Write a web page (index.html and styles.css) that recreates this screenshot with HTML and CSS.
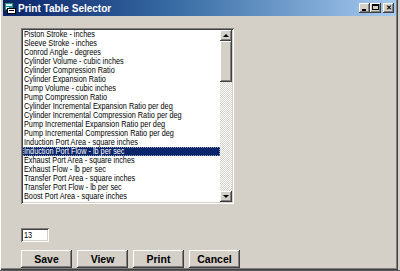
FILE: index.html
```html
<!DOCTYPE html>
<html>
<head>
<meta charset="utf-8">
<link rel="stylesheet" href="styles.css">
</head>
<body>
<div class="window">
  <div class="titlebar">
    <svg class="appicon" width="12" height="12" viewBox="0 0 12 12">
      <rect x="0.5" y="0.5" width="9" height="8" fill="#2e8c9c" stroke="#0b3540"/>
      <rect x="2" y="2" width="6" height="2" fill="#d8f4f8"/>
      <rect x="2" y="5" width="3" height="2" fill="#d8f4f8"/>
      <rect x="3.5" y="6.5" width="8" height="5" fill="#ffffff" stroke="#000"/>
      <rect x="5" y="8" width="5" height="1" fill="#000"/>
    </svg>
    <span class="title">Print Table Selector</span>
    <div class="controls">
      <div class="cbtn"><span class="g-min"></span></div>
      <div class="cbtn"><span class="g-max"></span></div>
      <div class="cbtn close"><span class="g-close">✕</span></div>
    </div>
  </div>
  <div class="content">
    <div class="listbox">
      <ul class="items">
        <li><span>Piston Stroke - inches</span></li>
        <li><span>Sleeve Stroke - inches</span></li>
        <li><span>Conrod Angle - degrees</span></li>
        <li><span>Cylinder Volume - cubic inches</span></li>
        <li><span>Cylinder Compression Ratio</span></li>
        <li><span>Cylinder Expansion Ratio</span></li>
        <li><span>Pump Volume - cubic inches</span></li>
        <li><span>Pump Compression Ratio</span></li>
        <li><span>Cylinder Incremental Expansion Ratio per deg</span></li>
        <li><span>Cylinder Incremental Compression Ratio per deg</span></li>
        <li><span>Pump Incremental Expansion Ratio per deg</span></li>
        <li><span>Pump Incremental Compression Ratio per deg</span></li>
        <li><span>Induction Port Area - square inches</span></li>
        <li class="sel"><span>Induction Port Flow - lb per sec</span></li>
        <li><span>Exhaust Port Area - square inches</span></li>
        <li><span>Exhaust Flow - lb per sec</span></li>
        <li><span>Transfer Port Area - square inches</span></li>
        <li><span>Transfer Port Flow - lb per sec</span></li>
        <li><span>Boost Port Area - square inches</span></li>
      </ul>
      <div class="scrollbar">
        <div class="sbtn"><span class="tri up"></span></div>
        <div class="thumb"></div>
        <div class="track"></div>
        <div class="sbtn"><span class="tri down"></span></div>
      </div>
    </div>
    <div class="field"><span>13</span></div>
    <div class="buttons">
      <div class="btn">Save</div>
      <div class="btn">View</div>
      <div class="btn">Print</div>
      <div class="btn">Cancel</div>
    </div>
  </div>
</div>
<div class="strip"></div>
</body>
</html>
```

FILE: styles.css
```css
* { box-sizing: border-box; }
html, body { margin: 0; padding: 0; }
body {
  width: 400px;
  height: 271px;
  background: #d4d0c8;
  overflow: hidden;
  font-family: "Liberation Sans", Arial, sans-serif;
}
.window {
  width: 398px;
  height: 270px;
  background: #d4d0c8;
  padding: 0 2px 0 3px;
  box-shadow: inset 1px 0 #ffffff, inset -1px -1px #404040, inset -2px -2px #808080;
}
.titlebar {
  height: 16px;
  display: flex;
  align-items: center;
  padding-left: 1px;
  background: linear-gradient(to right, #0a246a 0%, #3a6ea5 45%, #a6caf0 100%);
}
.appicon { flex: none; margin-right: 2px; }
.title {
  color: #ffffff;
  font-weight: bold;
  font-size: 10px;
  flex: 1;
}
.controls { display: flex; margin-right: 2px; }
.cbtn {
  width: 11px;
  height: 10px;
  background: #d4d0c8;
  box-shadow: inset -1px -1px #404040, inset 1px 1px #ffffff, inset -2px -2px #808080;
  position: relative;
}
.cbtn.close { margin-left: 2px; }
.g-min {
  position: absolute; left: 3px; top: 6px; width: 4px; height: 2px; background: #000;
}
.g-max {
  position: absolute; left: 2px; top: 1px; width: 7px; height: 6px;
  border: 1px solid #000; border-top-width: 2px;
}
.g-close {
  position: absolute; left: 0; top: 0; width: 11px; height: 10px;
  font-size: 7px; line-height: 9px; text-align: center; font-weight: bold; color: #000;
}
.content {
  padding: 12px 0 0 18px;
}
.listbox {
  width: 213px;
  height: 176px;
  background: #ffffff;
  padding: 2px;
  display: flex;
  box-shadow: inset 1px 1px #808080, inset -1px -1px #ffffff, inset 2px 2px #404040, inset -2px -2px #d4d0c8;
}
.items {
  list-style: none;
  margin: 0;
  padding: 0;
  flex: 1;
  font-size: 9px;
  line-height: 9px;
  color: #000;
}
.items li {
  height: 9px;
  padding-left: 1px;
  white-space: nowrap;
}
.items li span, .field span {
  display: inline-block;
  transform: scaleX(0.81);
  transform-origin: 0 50%;
}
.items li.sel {
  background: #0a246a;
  color: #ffffff;
  outline: 1px dotted #8f9bb8;
  outline-offset: -1px;
}
.scrollbar {
  width: 12px;
  display: flex;
  flex-direction: column;
}
.sbtn, .thumb {
  background: #d4d0c8;
  box-shadow: inset -1px -1px #404040, inset 1px 1px #ffffff, inset -2px -2px #808080;
}
.sbtn { height: 11px; position: relative; }
.thumb { height: 41px; }
.track {
  flex: 1;
  background: repeating-conic-gradient(#d4d0c8 0 25%, #ffffff 0 50%) 0 0 / 2px 2px;
}
.tri {
  position: absolute; left: 3px; width: 0; height: 0;
  border-left: 3px solid transparent; border-right: 3px solid transparent;
}
.tri.up { top: 4px; border-bottom: 3px solid #000; }
.tri.down { top: 4px; border-top: 3px solid #000; }
.field {
  margin-top: 24px;
  width: 28px;
  height: 14px;
  background: #fff;
  padding: 3px 0 0 3px;
  font-size: 9px;
  line-height: 9px;
  color: #000;
  box-shadow: inset 1px 1px #808080, inset -1px -1px #ffffff, inset 2px 2px #404040, inset -2px -2px #d4d0c8;
}
.buttons {
  margin-top: 8px;
  display: flex;
  gap: 5px;
}
.btn {
  width: 51px;
  height: 18px;
  display: flex;
  align-items: center;
  justify-content: center;
  font-weight: bold;
  font-size: 10.5px;
  color: #000;
  background: #d4d0c8;
  box-shadow: inset -1px -1px #404040, inset 1px 1px #ffffff, inset -2px -2px #808080;
}
.strip {
  height: 1px;
  background: #5a5a5a;
}
```
